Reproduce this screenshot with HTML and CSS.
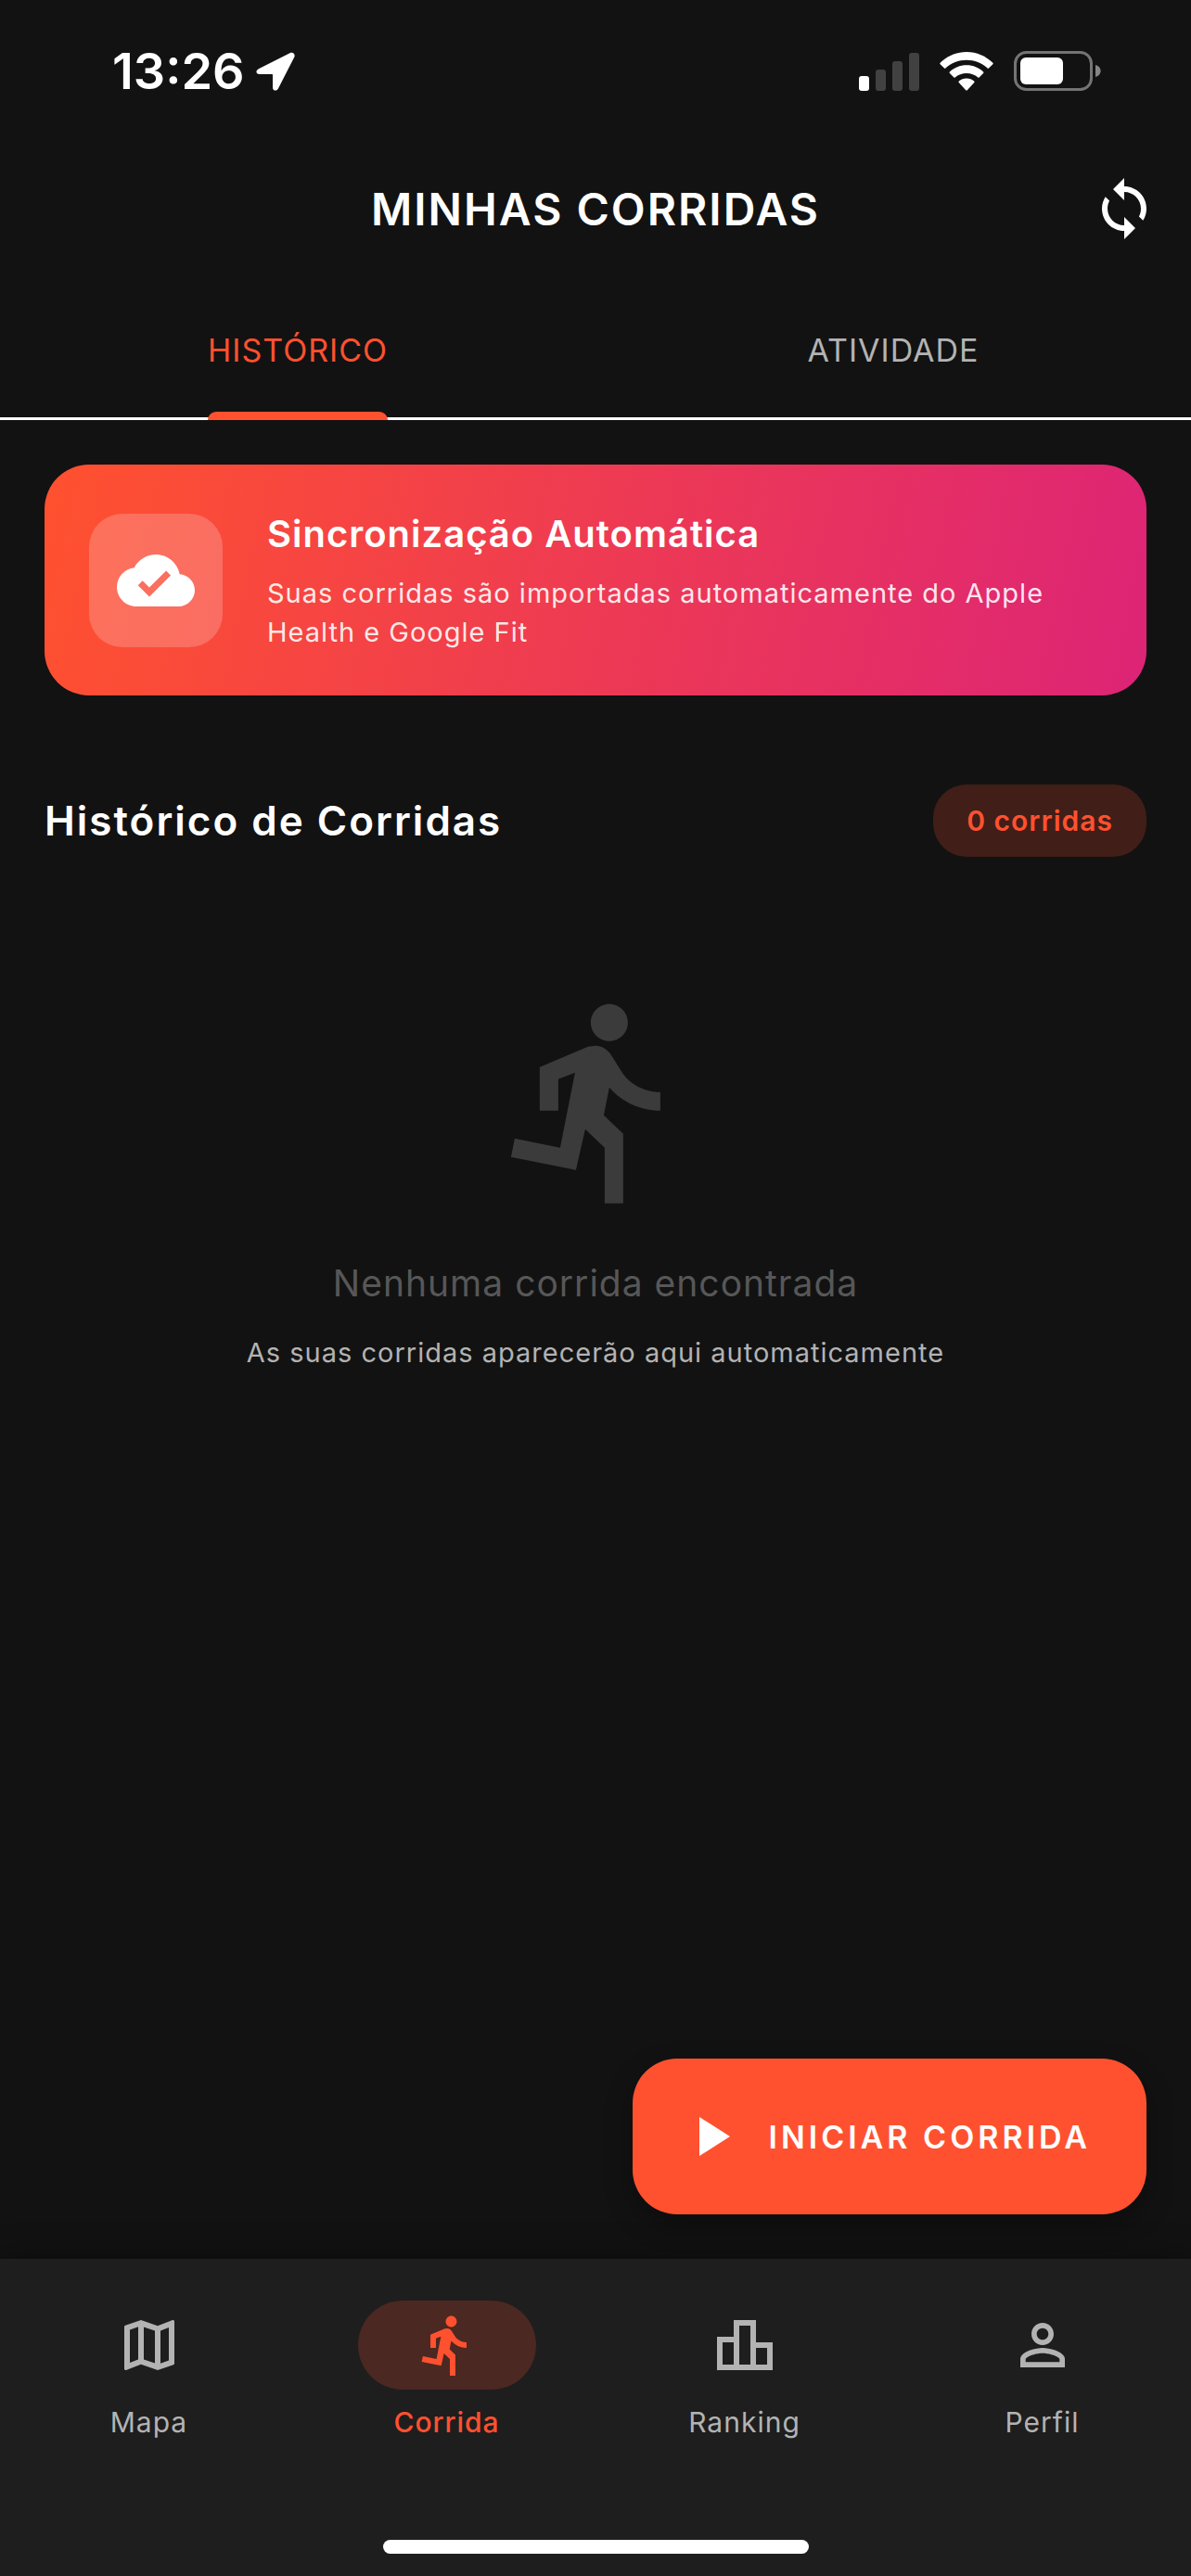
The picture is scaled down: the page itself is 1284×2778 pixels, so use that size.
FILE: index.html
```html
<!DOCTYPE html>
<html lang="pt">
<head>
  <meta charset="UTF-8">
  <meta name="viewport" content="width=device-width, initial-scale=1.0">
  <title>Minhas Corridas</title>
  <link rel="stylesheet" href="styles.css">
</head>
<body>
  <div class="status-bar">
    <div class="status-left">
      <span class="time">13:26</span>
      <svg width="42" height="42" viewBox="0 0 42 42" aria-hidden="true">
        <path d="M36.500 1.200L2.800 18.300C-.8 20.200 0 24 3.600 24H17.200Q18 24 18 24.800V38.200C18 42 22.300 43 24.200 39L41.200 5.800C42.800 2.300 39.800-.4 36.500 1.200z" fill="#fff"/>
      </svg>
    </div>
    <div class="status-right">
      <svg width="65" height="42" viewBox="0 0 65 42" aria-hidden="true">
        <rect x="0" y="26" width="11" height="16" rx="3" fill="#fff"/>
        <rect x="18" y="19" width="11" height="23" rx="3" fill="#414141"/>
        <rect x="36" y="10" width="11" height="32" rx="3" fill="#414141"/>
        <rect x="54" y="1" width="11" height="41" rx="3" fill="#414141"/>
      </svg>
      <svg width="58" height="42" viewBox="0 0 58 42" aria-hidden="true">
        <path d="M29 0C18 0 8 4.500.600 11.800Q0 12.500.600 13.200L5 17.600Q5.700 18.200 6.400 17.600C12.500 12 20.400 8.800 29 8.800S45.500 12 51.600 17.600Q52.300 18.200 53 17.600L57.400 13.200Q58 12.500 57.400 11.800C50 4.500 40 0 29 0zM29 14.300C22 14.300 15.600 17 10.900 21.500Q10.200 22.200 10.900 22.900L15.400 27.500Q16 28.100 16.700 27.500C20 24.600 24.300 23 29 23S38 24.600 41.300 27.500Q42 28.100 42.600 27.500L47.100 22.900Q47.800 22.200 47.100 21.500C42.400 17 36 14.300 29 14.300zM29 28.500C25.800 28.500 23 29.600 20.800 31.400Q20 32.100 20.700 32.900L28.200 41.200Q29 42 29.800 41.200L37.300 32.900Q38 32.100 37.200 31.400C35 29.600 32.200 28.500 29 28.500z" fill="#fff"/>
      </svg>
      <svg width="94" height="44" viewBox="0 0 94 44" aria-hidden="true">
        <rect x="1.500" y="1.500" width="82" height="40" rx="12" fill="none" stroke="#747474" stroke-width="3"/>
        <rect x="7" y="7" width="46" height="29" rx="6" fill="#fff"/>
        <path d="M88 15C95.500 17 95.500 26 88 28z" fill="#858585"/>
      </svg>
    </div>
  </div>

  <header class="app-bar">
    <h1>MINHAS CORRIDAS</h1>
    <button class="sync" type="button" aria-label="Sincronizar">
      <svg width="72" height="72" viewBox="0 0 24 24"><path d="M12 4V1L8 5l4 4V6c3.310 0 6 2.690 6 6 0 1.010-.25 1.970-.7 2.800l1.460 1.460C19.540 15.030 20 13.570 20 12c0-4.420-3.580-8-8-8zm0 14c-3.310 0-6-2.690-6-6 0-1.010.25-1.970.7-2.800L5.240 7.740C4.460 8.970 4 10.430 4 12c0 4.420 3.580 8 8 8v3l4-4-4-4v3z"/></svg>
    </button>
  </header>

  <nav class="tabs">
    <a href="#historico" class="selected">HISTÓRICO</a>
    <a href="#atividade">ATIVIDADE</a>
  </nav>

  <main id="historico">
    <section class="sync-card">
      <div class="sync-icon">
        <svg width="84" height="84" viewBox="0 0 24 24"><path d="M19.350 10.040C18.670 6.590 15.640 4 12 4 9.110 4 6.600 5.640 5.350 8.040 2.340 8.360 0 10.910 0 14c0 3.310 2.690 6 6 6h13c2.760 0 5-2.240 5-5 0-2.640-2.050-4.780-4.650-4.960zM10 17l-3.500-3.500 1.410-1.410L10 14.170 15.180 9l1.410 1.410L10 17z"/></svg>
      </div>
      <div class="sync-text">
        <h2>Sincronização Automática</h2>
        <p>Suas corridas são importadas automaticamente do Apple Health e Google Fit</p>
      </div>
    </section>

    <div class="section-head">
      <h2>Histórico de Corridas</h2>
      <span class="count">0 corridas</span>
    </div>

    <section class="empty">
      <svg width="240" height="240" viewBox="0 0 24 24"><path d="M13.490 5.480c1.100 0 2-.9 2-2s-.9-2-2-2-2 .9-2 2 .9 2 2 2zm-3.600 13.900l1-4.400 2.100 2v6h2v-7.500l-2.100-2 .6-3c1.300 1.500 3.300 2.500 5.500 2.500v-2c-1.900 0-3.500-1-4.300-2.400l-1-1.600c-.4-.6-1-1-1.700-1-.3 0-.5.1-.8.1l-5.200 2.200v4.700h2v-3.400l1.800-.7-1.600 8.100-4.900-1-.4 2 7 1.400z"/></svg>
      <p class="empty-title">Nenhuma corrida encontrada</p>
      <p class="empty-sub">As suas corridas aparecerão aqui automaticamente</p>
    </section>

    <button class="start" type="button">
      <svg width="72" height="72" viewBox="0 0 24 24"><path d="M8 5v14l11-7z"/></svg>
      INICIAR CORRIDA
    </button>
  </main>

  <footer class="bottom">
    <nav class="bottom-nav">
      <a href="#mapa">
        <span class="pill"><svg width="72" height="72" viewBox="0 0 24 24"><path d="M20.500 3l-.16.03L15 5.100 9 3 3.360 4.900c-.21.07-.36.25-.36.48V20.500c0 .28.22.5.5.5l.16-.03L9 18.900l6 2.100 5.640-1.900c.21-.07.36-.25.36-.48V3.500c0-.28-.22-.5-.5-.5zM10 5.470l4 1.400v11.660l-4-1.400V5.470zm-5 .99l3-1.010v11.700l-3 1.160V6.460zm14 11.080l-3 1.010V6.860l3-1.160v11.840z"/></svg></span>
        Mapa
      </a>
      <a href="#corrida" class="active">
        <span class="pill"><svg width="72" height="72" viewBox="0 0 24 24"><path d="M13.490 5.480c1.100 0 2-.9 2-2s-.9-2-2-2-2 .9-2 2 .9 2 2 2zm-3.600 13.900l1-4.400 2.100 2v6h2v-7.500l-2.100-2 .6-3c1.300 1.500 3.300 2.500 5.500 2.500v-2c-1.900 0-3.500-1-4.300-2.400l-1-1.600c-.4-.6-1-1-1.700-1-.3 0-.5.1-.8.1l-5.200 2.200v4.700h2v-3.400l1.800-.7-1.600 8.100-4.900-1-.4 2 7 1.400z"/></svg></span>
        Corrida
      </a>
      <a href="#ranking">
        <span class="pill"><svg width="72" height="72" viewBox="0 0 24 24"><path d="M16 11V3H8v6H2v12h20V11h-6zm-6-6h4v14h-4V5zm-6 6h4v8H4v-8zm16 8h-4v-6h4v6z"/></svg></span>
        Ranking
      </a>
      <a href="#perfil">
        <span class="pill"><svg width="72" height="72" viewBox="0 0 24 24"><path d="M12 5.900c1.160 0 2.100.94 2.100 2.100s-.94 2.100-2.100 2.100S9.900 9.160 9.900 8s.94-2.100 2.100-2.100m0 9c2.970 0 6.100 1.460 6.100 2.100v1.100H5.900V17c0-.64 3.130-2.100 6.100-2.100M12 4C9.790 4 8 5.790 8 8s1.790 4 4 4 4-1.790 4-4-1.790-4-4-4zm0 9c-2.670 0-8 1.340-8 4v3h16v-3c0-2.660-5.330-4-8-4z"/></svg></span>
        Perfil
      </a>
    </nav>
    <div class="home-bar"></div>
  </footer>
</body>
</html>
```
FILE: styles.css
```css
* {
  box-sizing: border-box;
}

body {
  margin: 0;
  min-height: 100vh;
  display: flex;
  flex-direction: column;
  background-color: #121212;
  color: #fff;
  font-family: Inter, "Liberation Sans", sans-serif;
}

h1, h2, p {
  margin: 0;
}

a {
  text-decoration: none;
}

button {
  border: none;
  font-family: inherit;
  cursor: pointer;
}

svg {
  display: block;
  fill: currentColor;
}

/* Barra de status */
.status-bar {
  height: 141px;
  padding: 12px 97px 0 121px;
  display: flex;
  justify-content: space-between;
  align-items: center;
}

.status-left {
  display: flex;
  align-items: center;
  gap: 12px;
}

.time {
  font-size: 54px;
  font-weight: 600;
}

.status-right {
  display: flex;
  align-items: center;
  gap: 22px;
}

/* Cabeçalho */
.app-bar {
  height: 168px;
  padding: 0 36px;
  display: grid;
  grid-template-columns: 1fr auto 1fr;
  align-items: center;
}

.app-bar h1 {
  grid-column: 2;
  font-size: 48px;
  font-weight: 600;
  letter-spacing: 2px;
}

.sync {
  justify-self: end;
  padding: 0;
  background: none;
  color: #fff;
}

/* Abas */
.tabs {
  height: 144px;
  display: grid;
  grid-template-columns: 1fr 1fr;
  justify-items: center;
  border-bottom: 3px solid #fff;
}

.tabs a {
  position: relative;
  padding-top: 45px;
  color: #b3b3b3;
  font-size: 34px;
  line-height: 48px;
  letter-spacing: 1px;
}

.tabs .selected {
  color: #ff512f;
}

/* indicador por cima da linha branca */
.tabs .selected::after {
  content: "";
  position: absolute;
  left: 0;
  right: 0;
  bottom: -3px;
  height: 9px;
  border-radius: 9px 9px 0 0;
  background-color: #ff512f;
}

main {
  flex: 1;
  padding: 48px;
  display: flex;
  flex-direction: column;
}

/* Cartão de sincronização */
.sync-card {
  padding: 47px 48px;
  display: flex;
  align-items: center;
  gap: 48px;
  border-radius: 48px;
  background: linear-gradient(102deg, #ff512f, #dd2476);
}

.sync-icon {
  flex: none;
  padding: 30px;
  border-radius: 36px;
  background-color: rgba(255, 255, 255, 0.2);
}

.sync-text h2 {
  margin-bottom: 15px;
  font-size: 40px;
  font-weight: 600;
  line-height: 56px;
  letter-spacing: 1px;
}

.sync-text p {
  color: rgba(255, 255, 255, 0.9);
  font-size: 29px;
  line-height: 42px;
  letter-spacing: 1px;
}

/* Histórico */
.section-head {
  margin-top: 96px;
  display: flex;
  justify-content: space-between;
  align-items: center;
}

.section-head h2 {
  font-size: 44px;
  font-weight: 600;
  letter-spacing: 2px;
}

.count {
  padding: 18px 36px;
  border-radius: 36px;
  background-color: rgba(255, 81, 47, 0.2);
  color: #ff512f;
  font-size: 30px;
  font-weight: 600;
  line-height: 42px;
  letter-spacing: 1px;
}

.empty {
  margin-top: 144px;
  display: flex;
  flex-direction: column;
  align-items: center;
  text-align: center;
}

.empty svg {
  color: #3b3b3b;
}

.empty-title {
  margin: 48px 0 26px;
  color: #575757;
  font-size: 39px;
  line-height: 56px;
  letter-spacing: 1px;
}

.empty-sub {
  color: #b3b3b3;
  font-size: 29px;
  line-height: 42px;
  letter-spacing: 1px;
}

.start {
  margin-top: auto;
  align-self: flex-end;
  height: 168px;
  padding: 0 60px 0 48px;
  display: flex;
  align-items: center;
  gap: 27px;
  border-radius: 48px;
  background-color: #ff512f;
  color: #fff;
  font-size: 34px;
  font-weight: 600;
  letter-spacing: 4px;
  box-shadow: 0 12px 30px rgba(0, 0, 0, 0.3);
}

/* Navegação inferior */
.bottom {
  padding: 45px 0 24px;
  background-color: #1e1e1e;
  box-shadow: 0 -6px 30px rgba(0, 0, 0, 0.3);
}

.bottom-nav {
  display: grid;
  grid-template-columns: repeat(4, 1fr);
}

.bottom-nav a {
  display: flex;
  flex-direction: column;
  align-items: center;
  gap: 14px;
  color: #b3b3b3;
  font-size: 30px;
  line-height: 42px;
  letter-spacing: 1px;
}

.bottom-nav .active {
  color: #ff512f;
  font-weight: 500;
}

.pill {
  width: 192px;
  height: 96px;
  display: flex;
  align-items: center;
  justify-content: center;
  border-radius: 48px;
}

.active .pill {
  background-color: rgba(255, 81, 47, 0.2);
}

.home-bar {
  width: 459px;
  height: 15px;
  margin: 106px auto 0;
  border-radius: 8px;
  background-color: #fff;
}
```
